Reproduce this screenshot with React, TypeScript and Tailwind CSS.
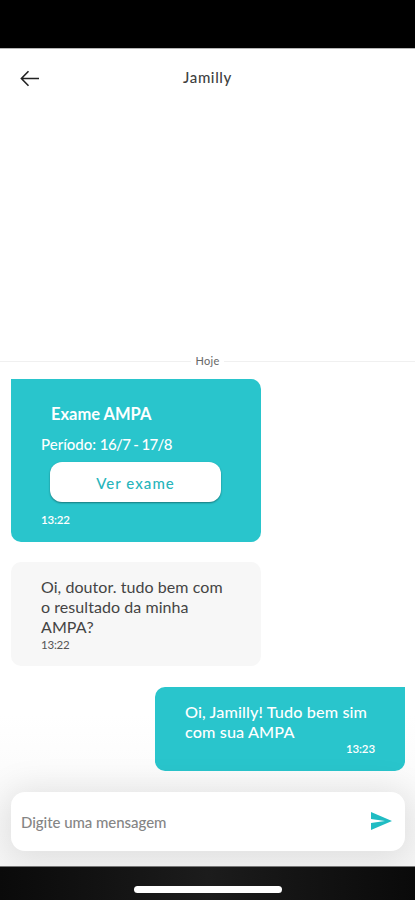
import { ReactNode } from "react";

function Header({ name }: { name: string }) {
  return (
    <header className="grid h-[60px] grid-cols-[60px_1fr_60px] items-center border-t border-[#b5b5b5]">
      <button className="pl-5" aria-label="Voltar">
        <svg width="20" height="18" viewBox="0 0 20 18" fill="none" stroke="#222" strokeWidth="1.6">
          <path d="M19 8.5H1.5M8.5 1.2L1.4 8.5l7.1 7.3" />
        </svg>
      </button>
      <h1 className="mt-[-3px] text-center text-[15px] leading-5 font-medium tracking-[0.6px] text-[#3f3f3f]">
        {name}
      </h1>
    </header>
  );
}

function DayDivider({ label }: { label: string }) {
  return (
    <div className="flex h-4 items-center gap-1">
      <div className="h-px flex-1 bg-[#f0f0f0]" />
      <span className="text-[11px] leading-4 tracking-[0.3px] text-[#666]">{label}</span>
      <div className="h-px flex-1 bg-[#f0f0f0]" />
    </div>
  );
}

function Bubble({ className, children }: { className: string; children: ReactNode }) {
  return <div className={"w-[250px] shrink-0 pl-[30px] " + className}>{children}</div>;
}

function MessageInput() {
  return (
    <div className="mr-[10px] ml-[11px] mt-[21px] flex h-[59px] shrink-0 items-center justify-between rounded-[14px] bg-white pr-[13px] pl-[10px] shadow-[0_3px_34px_6px_rgba(0,0,0,0.10)]">
      <span className="text-[15px] leading-5 font-medium tracking-[-0.05px] text-[#858585]">
        Digite uma mensagem
      </span>
      <button className="mt-[-1px]" aria-label="Enviar">
        <svg width="21" height="18" viewBox="0 0 21 18" fill="#20bcc3">
          <path d="M0 0L21 9L0 18V11L14 9L0 7Z" />
        </svg>
      </button>
    </div>
  );
}

export default function App() {
  return (
    <div className="flex h-[900px] w-[415px] flex-col overflow-hidden bg-white font-['Lato',sans-serif]">
      <div className="h-12 shrink-0 bg-black" />
      <Header name="Jamilly" />

      <main className="flex h-[758px] shrink-0 flex-col overflow-hidden bg-linear-to-b from-white from-80% to-[#f6f6f6]">
        <div className="mt-[245px]">
          <DayDivider label="Hoje" />
        </div>

        <Bubble className="mt-[10px] ml-[11px] h-[163px] rounded-[10px] rounded-tl-none bg-[#29c5cc] pt-[25px] text-white">
          <h2 className="pl-[10px] text-[16.5px] leading-5 font-bold">Exame AMPA</h2>
          <p className="mt-[10px] text-[15px] leading-5 font-medium">
            Período: <span className="tracking-[-0.65px]">16/7 - 17/8</span>
          </p>
          <button className="mt-[8px] ml-[9px] block h-[40px] w-[171px] rounded-[12px] bg-white text-[15px] leading-5 font-medium tracking-[1.05px] text-[#26b5bb] shadow-[0_1px_2px_rgba(0,0,0,0.4)]">
            <span className="relative top-px">Ver exame</span>
          </button>
          <p className="mt-[12px] text-[11.5px] leading-3 font-semibold tracking-[-0.2px]">13:22</p>
        </Bubble>

        <Bubble className="mt-5 ml-[11px] h-[104px] rounded-[10px] bg-[#f7f7f7] pt-[15px] text-[#444]">
          <p className="text-[16px] leading-5 tracking-[0.06px]">
            Oi, doutor. tudo bem com
            <br />o resultado da minha
            <br />
            AMPA?
          </p>
          <p className="mt-[2px] text-[11.5px] leading-3 tracking-[-0.2px] text-[#555]">13:22</p>
        </Bubble>

        <Bubble className="mt-[21px] ml-[155px] h-[84px] rounded-[10px] rounded-tr-none bg-[#29c5cc] pt-[15px] text-white">
          <p className="text-[16.2px] leading-5 font-medium tracking-[0.12px]">
            Oi, Jamilly! Tudo bem sim
            <br />
            com sua AMPA
          </p>
          <p className="mt-[1px] pr-[30px] text-right text-[11.5px] leading-3 font-semibold tracking-[-0.1px]">
            13:23
          </p>
        </Bubble>

        <MessageInput />
      </main>

      <footer className="flex flex-1 justify-center border-t border-[#777] bg-linear-to-r from-[#0a0a0a] via-[#1c1c1c] to-[#0a0a0a] pt-[19px]">
        <div className="h-[7px] w-[148px] rounded-full bg-white" />
      </footer>
    </div>
  );
}
